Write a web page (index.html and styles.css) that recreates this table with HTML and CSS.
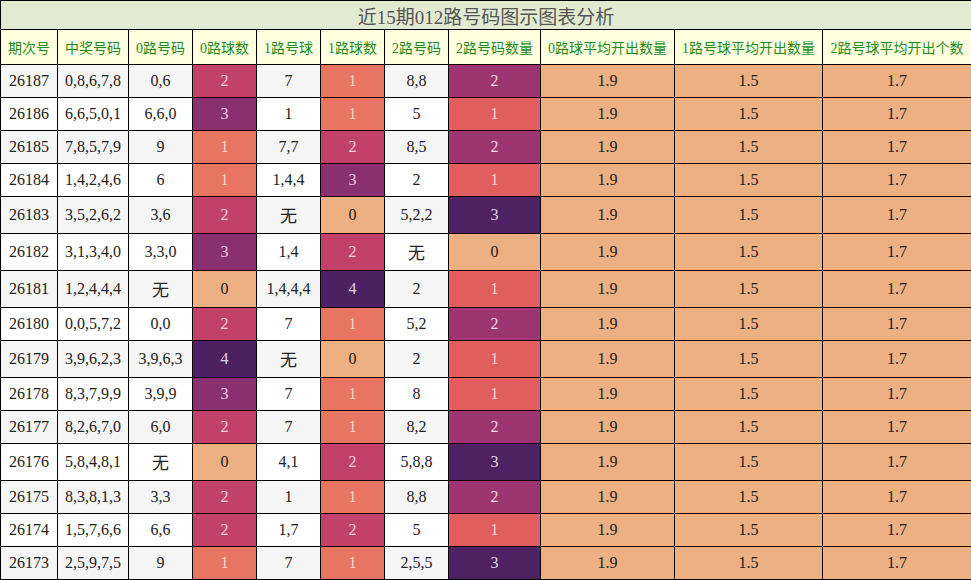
FILE: index.html
```html
<!DOCTYPE html>
<html lang="zh-CN">
<head>
<meta charset="utf-8">
<title>近15期012路号码图示图表分析</title>
<link rel="stylesheet" href="styles.css">
</head>
<body>
<table class="chart">
  <colgroup>
    <col class="c-issue"><col class="c-win"><col class="c-n"><col class="c-n"><col class="c-n"><col class="c-n"><col class="c-n"><col class="c-cnt2"><col class="c-avg0"><col class="c-avg1"><col class="c-avg2">
  </colgroup>
  <thead>
    <tr><th class="title" colspan="11">近15期012路号码图示图表分析</th></tr>
    <tr class="head">
      <th>期次号</th><th>中奖号码</th><th>0路号码</th><th>0路球数</th><th>1路号球</th><th>1路球数</th><th>2路号码</th><th>2路号码数量</th><th>0路球平均开出数量</th><th>1路号球平均开出数量</th><th>2路号球平均开出个数</th>
    </tr>
  </thead>
  <tbody>
    <tr class="odd"><td>26187</td><td>0,8,6,7,8</td><td>0,6</td><td class="h2">2</td><td>7</td><td class="h1">1</td><td>8,8</td><td class="k2">2</td><td class="avg">1.9</td><td class="avg">1.5</td><td class="avg">1.7</td></tr>
    <tr><td>26186</td><td>6,6,5,0,1</td><td>6,6,0</td><td class="h3">3</td><td>1</td><td class="h1">1</td><td>5</td><td class="k1">1</td><td class="avg">1.9</td><td class="avg">1.5</td><td class="avg">1.7</td></tr>
    <tr class="odd"><td>26185</td><td>7,8,5,7,9</td><td>9</td><td class="h1">1</td><td>7,7</td><td class="h2">2</td><td>8,5</td><td class="k2">2</td><td class="avg">1.9</td><td class="avg">1.5</td><td class="avg">1.7</td></tr>
    <tr><td>26184</td><td>1,4,2,4,6</td><td>6</td><td class="h1">1</td><td>1,4,4</td><td class="h3">3</td><td>2</td><td class="k1">1</td><td class="avg">1.9</td><td class="avg">1.5</td><td class="avg">1.7</td></tr>
    <tr class="odd"><td>26183</td><td>3,5,2,6,2</td><td>3,6</td><td class="h2">2</td><td><span class="none">无</span></td><td class="h0">0</td><td>5,2,2</td><td class="k3">3</td><td class="avg">1.9</td><td class="avg">1.5</td><td class="avg">1.7</td></tr>
    <tr><td>26182</td><td>3,1,3,4,0</td><td>3,3,0</td><td class="h3">3</td><td>1,4</td><td class="h2">2</td><td><span class="none">无</span></td><td class="h0">0</td><td class="avg">1.9</td><td class="avg">1.5</td><td class="avg">1.7</td></tr>
    <tr class="odd"><td>26181</td><td>1,2,4,4,4</td><td><span class="none">无</span></td><td class="h0">0</td><td>1,4,4,4</td><td class="h4">4</td><td>2</td><td class="k1">1</td><td class="avg">1.9</td><td class="avg">1.5</td><td class="avg">1.7</td></tr>
    <tr><td>26180</td><td>0,0,5,7,2</td><td>0,0</td><td class="h2">2</td><td>7</td><td class="h1">1</td><td>5,2</td><td class="k2">2</td><td class="avg">1.9</td><td class="avg">1.5</td><td class="avg">1.7</td></tr>
    <tr class="odd"><td>26179</td><td>3,9,6,2,3</td><td>3,9,6,3</td><td class="h4">4</td><td><span class="none">无</span></td><td class="h0">0</td><td>2</td><td class="k1">1</td><td class="avg">1.9</td><td class="avg">1.5</td><td class="avg">1.7</td></tr>
    <tr><td>26178</td><td>8,3,7,9,9</td><td>3,9,9</td><td class="h3">3</td><td>7</td><td class="h1">1</td><td>8</td><td class="k1">1</td><td class="avg">1.9</td><td class="avg">1.5</td><td class="avg">1.7</td></tr>
    <tr class="odd"><td>26177</td><td>8,2,6,7,0</td><td>6,0</td><td class="h2">2</td><td>7</td><td class="h1">1</td><td>8,2</td><td class="k2">2</td><td class="avg">1.9</td><td class="avg">1.5</td><td class="avg">1.7</td></tr>
    <tr><td>26176</td><td>5,8,4,8,1</td><td><span class="none">无</span></td><td class="h0">0</td><td>4,1</td><td class="h2">2</td><td>5,8,8</td><td class="k3">3</td><td class="avg">1.9</td><td class="avg">1.5</td><td class="avg">1.7</td></tr>
    <tr class="odd"><td>26175</td><td>8,3,8,1,3</td><td>3,3</td><td class="h2">2</td><td>1</td><td class="h1">1</td><td>8,8</td><td class="k2">2</td><td class="avg">1.9</td><td class="avg">1.5</td><td class="avg">1.7</td></tr>
    <tr><td>26174</td><td>1,5,7,6,6</td><td>6,6</td><td class="h2">2</td><td>1,7</td><td class="h2">2</td><td>5</td><td class="k1">1</td><td class="avg">1.9</td><td class="avg">1.5</td><td class="avg">1.7</td></tr>
    <tr class="odd"><td>26173</td><td>2,5,9,7,5</td><td>9</td><td class="h1">1</td><td>7</td><td class="h1">1</td><td>2,5,5</td><td class="k3">3</td><td class="avg">1.9</td><td class="avg">1.5</td><td class="avg">1.7</td></tr>
  </tbody>
</table>
</body>
</html>
```

FILE: styles.css
```css
html, body {
  margin: 0;
  padding: 0;
  background: #ffffff;
}

.chart {
  width: 971px;
  table-layout: fixed;
  border-collapse: collapse;
  font-family: "Liberation Serif", "Noto Sans CJK SC", serif;
  font-size: 16px;
  color: #222222;
}

.c-issue { width: 57px; }
.c-win { width: 71px; }
.c-n { width: 64px; }
.c-cnt2 { width: 92px; }
.c-avg0 { width: 134px; }
.c-avg1 { width: 148px; }
.c-avg2 { width: 149px; }

.chart th,
.chart td {
  border: 1px solid #000000;
  text-align: center;
  padding: 0;
}

.chart td {
  height: 32px;
  padding: 0;
}

.title {
  height: 28px;
  background: #e2ebd2;
  color: #555555;
  font-weight: normal;
  font-size: 19px;
  font-family: "Liberation Serif", "Noto Sans CJK SC", serif;
}

.head th {
  height: 34px;
  background: #ffffe0;
  color: #1f8c1f;
  font-weight: normal;
  font-size: 14px;
  font-family: "Liberation Serif", "Noto Sans CJK SC", sans-serif;
  white-space: nowrap;
}

.odd td { background: #f5f5f5; }

.none {
  font-family: "Noto Sans CJK SC", sans-serif;
  font-size: 17px;
  line-height: 36px;
  display: inline-block;
  vertical-align: middle;
}

.chart td.h0, .chart td.avg { background: #edb082; color: #222222; }
.chart td.h1 { background: #e87462; color: #f6d6d6; }
.chart td.h2 { background: #c2416a; color: #f6d6e0; }
.chart td.h3 { background: #8a2f70; color: #e8cde0; }
.chart td.h4 { background: #4c2162; color: #e0d0e8; }
.chart td.k1 { background: #e05e5e; color: #f6d6d6; }
.chart td.k2 { background: #9d3570; color: #f0d6e6; }
.chart td.k3 { background: #4e2262; color: #e0d0e8; }
```
